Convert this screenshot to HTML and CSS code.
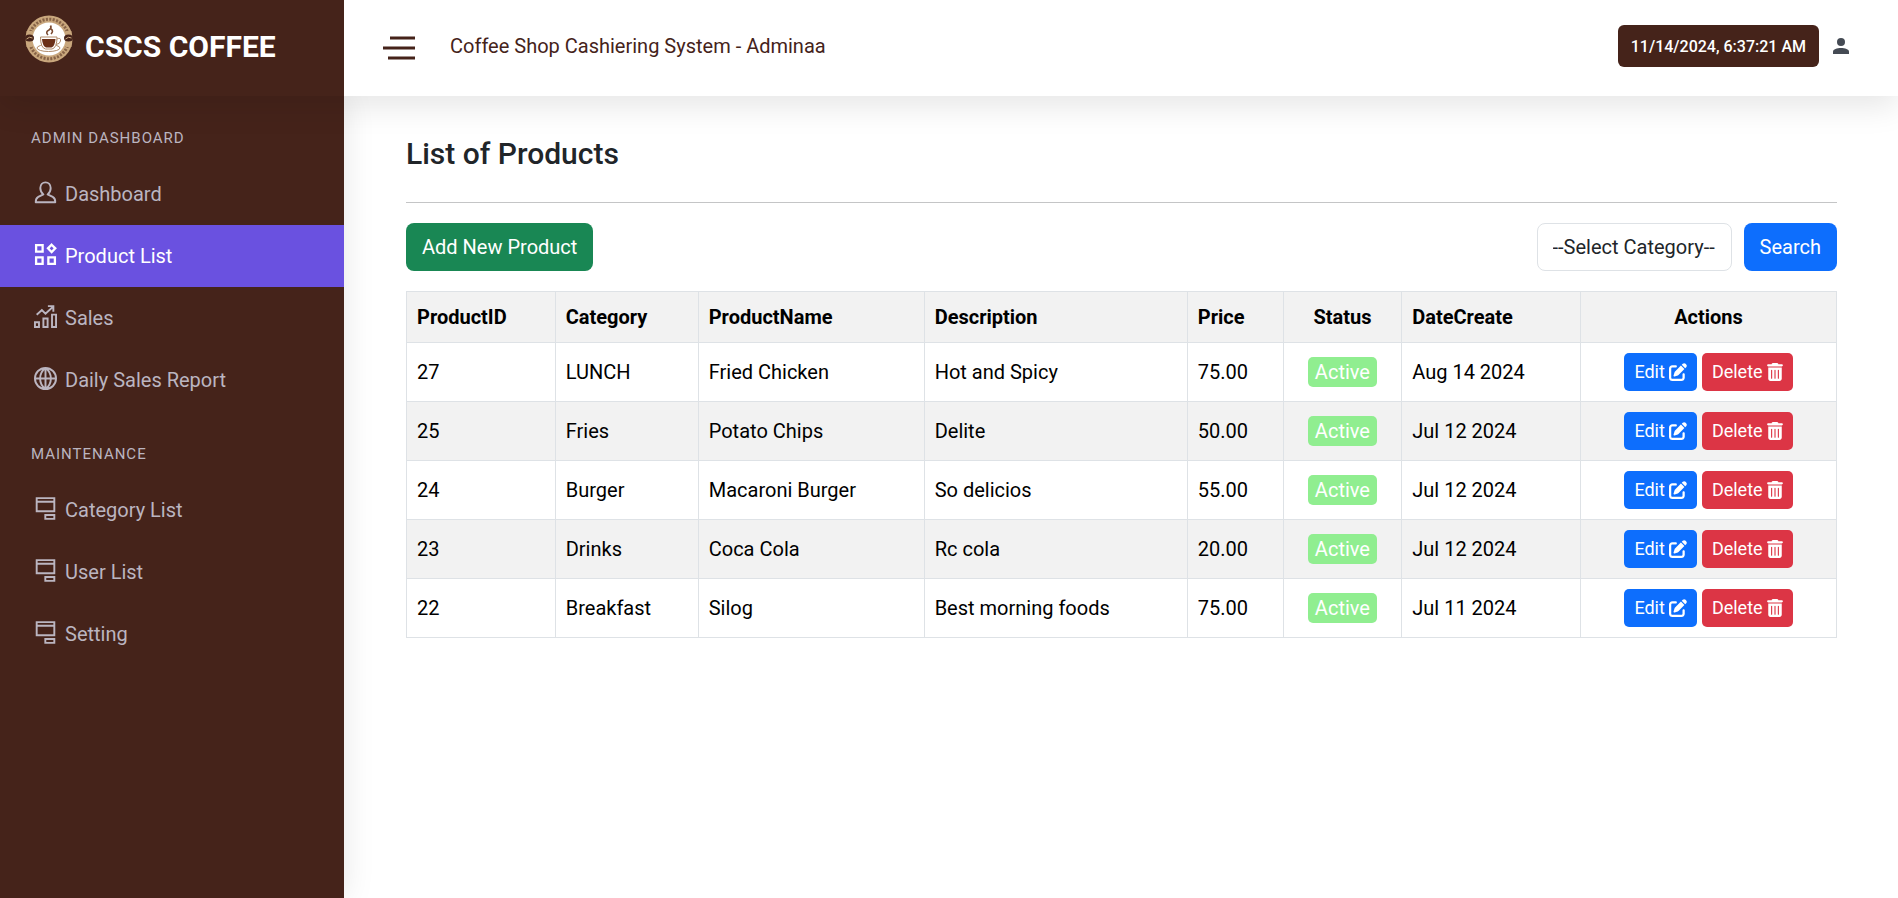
FILE: index.html
```html
<!DOCTYPE html>
<html lang="en">
<head>
<meta charset="utf-8">
<title>CSCS Coffee - List of Products</title>
<link rel="stylesheet" href="styles.css">
</head>
<body>
<svg class="sprite" aria-hidden="true">
  <symbol id="user" viewBox="0 0 24 24"><path fill="none" stroke="currentColor" stroke-width="2" stroke-linejoin="round" d="M9.800 14C7.400 12.300 6.600 10 6.600 7.400 6.600 3.600 9 1.400 12 1.400s5.400 2.200 5.400 6C17.400 10 16.600 12.300 14.200 14L19.500 16.600Q22.200 18 22.200 22.200H1.800Q1.800 18 4.500 16.600Z"/></symbol>
  <symbol id="grid" viewBox="0 0 24 24"><path fill="none" stroke="currentColor" stroke-width="2.400" d="M2.200 2.200H9V9H2.200ZM2.200 15H9V21.800H2.200ZM15 15H21.800V21.800H15ZM18.400 1.800L22.200 5.600 18.400 9.400 14.600 5.600Z"/></symbol>
  <symbol id="chart" viewBox="0 0 24 24"><path fill="none" stroke="currentColor" stroke-width="2" d="M1 18H5.200V23H1ZM9.800 14H14.200V23H9.800ZM18.800 10H23V23H18.800ZM2.800 10.200L8.200 5.200 12 9 19.800 1.800M14.500 1.200H20.200V7"/></symbol>
  <symbol id="globe" viewBox="0 0 24 24"><path fill="none" stroke="currentColor" stroke-width="2" d="M12 1A11 11 0 1 0 12 23 11 11 0 1 0 12 1ZM12 1C4.500 6.500 4.500 17.500 12 23M12 1C19.500 6.500 19.500 17.500 12 23M12 1V23M1 12H23"/></symbol>
  <symbol id="panel" viewBox="0 0 24 24"><path fill="none" stroke="currentColor" stroke-width="2" d="M2.800 1.200H21.200V14.800H2.800ZM2.800 5H21.200M11.800 18.800H21.200V22.800H11.800Z"/></symbol>
  <symbol id="edit" viewBox="0 0 512 512"><path fill="currentColor" d="M471.600 21.700c-21.900-21.900-57.300-21.900-79.200 0L362.300 51.700l97.900 97.900 30.100-30.100c21.900-21.900 21.900-57.300 0-79.200L471.600 21.700zm-299.200 220c-6.100 6.100-10.800 13.600-13.500 21.900l-29.600 88.800c-2.900 8.600-.6 18.100 5.800 24.600s15.900 8.700 24.600 5.800l88.800-29.600c8.200-2.700 15.700-7.400 21.900-13.500L437.700 172.300 339.700 74.300 172.400 241.700zM96 64C43 64 0 107 0 160V416c0 53 43 96 96 96H352c53 0 96-43 96-96V320c0-17.700-14.300-32-32-32s-32 14.300-32 32v96c0 17.700-14.300 32-32 32H96c-17.700 0-32-14.300-32-32V160c0-17.700 14.300-32 32-32h96c17.700 0 32-14.300 32-32s-14.300-32-32-32H96z"/></symbol>
  <symbol id="trash" viewBox="0 0 448 512"><path fill="currentColor" d="M135.200 17.700C140.600 6.800 151.700 0 163.800 0H284.200c12.100 0 23.200 6.800 28.600 17.700L320 32h96c17.700 0 32 14.300 32 32s-14.300 32-32 32H32C14.300 96 0 81.700 0 64S14.300 32 32 32h96l7.200-14.300zM32 128H416V448c0 35.300-28.700 64-64 64H96c-35.300 0-64-28.700-64-64V128zm96 64c-8.800 0-16 7.200-16 16V432c0 8.800 7.200 16 16 16s16-7.200 16-16V208c0-8.800-7.200-16-16-16zm96 0c-8.800 0-16 7.200-16 16V432c0 8.800 7.200 16 16 16s16-7.200 16-16V208c0-8.800-7.200-16-16-16zm96 0c-8.800 0-16 7.200-16 16V432c0 8.800 7.200 16 16 16s16-7.200 16-16V208c0-8.800-7.200-16-16-16z"/></symbol>
</svg>

<header class="topbar">
  <a class="brand" href="#">
    <svg class="brand-logo" viewBox="0 0 48 48" aria-hidden="true">
      <circle cx="24" cy="24" r="23.500" fill="#c9a77d"/>
      <circle cx="24" cy="24" r="19.800" fill="none" stroke="#6b4630" stroke-width="3" stroke-dasharray="2 1.400" stroke-opacity=".7" pathLength="122"/>
      <path fill="#c9a77d" d="M1.500 16H7V32H1.500ZM41 16H46.500V32H41Z"/>
      <circle cx="24" cy="24" r="16.500" fill="#fff"/>
      <ellipse cx="4.500" cy="23" rx="4.500" ry="3.500" fill="#45231a"/>
      <ellipse cx="43.500" cy="23" rx="4.500" ry="3.500" fill="#45231a"/>
      <path fill="none" stroke="#c9a77d" d="M1.500 24Q4.500 21 7.500 23M40.500 24Q43.500 21 46.500 23"/>
      <ellipse cx="23.500" cy="33" rx="11.500" ry="3.500" fill="#fff" stroke="#b08a68"/>
      <path fill="#fff" stroke="#b08a68" d="M15.500 22H32Q32 33 27 34H20.500Q15.500 33 15.500 22ZM32 24Q36 22 35.500 26 35 29 31 29.500"/>
      <path fill="#6b3018" d="M17 24H30.500Q30 31 26.500 32.500H21Q17.500 31 17 24Z"/>
      <path fill="none" stroke="#7a4a30" stroke-width="1.600" d="M23 20Q20 17 24 15 27 13 25.500 10.500M26 19Q29 16 26 14"/>
    </svg>
    <span class="brand-name">CSCS COFFEE</span>
  </a>
  <div class="topbar-main">
    <button class="menu-toggle" type="button" aria-label="Toggle menu">
      <svg viewBox="0 0 32 24" aria-hidden="true"><path stroke="#45231a" stroke-width="3" d="M7 2H32M0 12H32M5 22H32"/></svg>
    </button>
    <span class="system-name">Coffee Shop Cashiering System - Adminaa</span>
    <span class="clock">11/14/2024, 6:37:21 AM</span>
    <button class="account" type="button" aria-label="Account">
      <svg viewBox="0 0 16 16" aria-hidden="true"><circle cx="8" cy="4" r="4" fill="#454b54"/><path fill="#454b54" d="M0 16V13.500C0 8.700 16 8.700 16 13.500V16Z"/></svg>
    </button>
  </div>
</header>

<div class="layout">
  <nav class="sidebar">
    <h2 class="nav-heading">ADMIN DASHBOARD</h2>
    <a class="nav-link" href="#"><svg aria-hidden="true"><use href="#user"/></svg>Dashboard</a>
    <a class="nav-link active" href="#"><svg aria-hidden="true"><use href="#grid"/></svg>Product List</a>
    <a class="nav-link" href="#"><svg aria-hidden="true"><use href="#chart"/></svg>Sales</a>
    <a class="nav-link" href="#"><svg aria-hidden="true"><use href="#globe"/></svg>Daily Sales Report</a>
    <h2 class="nav-heading">MAINTENANCE</h2>
    <a class="nav-link" href="#"><svg aria-hidden="true"><use href="#panel"/></svg>Category List</a>
    <a class="nav-link" href="#"><svg aria-hidden="true"><use href="#panel"/></svg>User List</a>
    <a class="nav-link" href="#"><svg aria-hidden="true"><use href="#panel"/></svg>Setting</a>
  </nav>

  <main class="content">
    <h1 class="page-title">List of Products</h1>
    <hr class="rule">
    <div class="toolbar">
      <button class="btn btn-success" type="button">Add New Product</button>
      <form class="filter">
        <select class="category" aria-label="Category"><option>--Select Category--</option></select>
        <button class="btn btn-primary" type="button">Search</button>
      </form>
    </div>
    <table class="products">
      <colgroup><col class="c-id"><col class="c-cat"><col class="c-name"><col class="c-desc"><col class="c-price"><col class="c-status"><col class="c-date"><col></colgroup>
      <thead>
        <tr><th>ProductID</th><th>Category</th><th>ProductName</th><th>Description</th><th>Price</th><th class="center">Status</th><th>DateCreate</th><th class="center">Actions</th></tr>
      </thead>
      <tbody>
        <tr><td>27</td><td>LUNCH</td><td>Fried Chicken</td><td>Hot and Spicy</td><td>75.00</td><td class="center"><span class="status">Active</span></td><td>Aug 14 2024</td><td><div class="actions"><button class="btn-sm btn-primary" type="button">Edit<svg class="i-edit" aria-hidden="true"><use href="#edit"/></svg></button><button class="btn-sm btn-danger" type="button">Delete<svg class="i-trash" aria-hidden="true"><use href="#trash"/></svg></button></div></td></tr>
        <tr><td>25</td><td>Fries</td><td>Potato Chips</td><td>Delite</td><td>50.00</td><td class="center"><span class="status">Active</span></td><td>Jul 12 2024</td><td><div class="actions"><button class="btn-sm btn-primary" type="button">Edit<svg class="i-edit" aria-hidden="true"><use href="#edit"/></svg></button><button class="btn-sm btn-danger" type="button">Delete<svg class="i-trash" aria-hidden="true"><use href="#trash"/></svg></button></div></td></tr>
        <tr><td>24</td><td>Burger</td><td>Macaroni Burger</td><td>So delicios</td><td>55.00</td><td class="center"><span class="status">Active</span></td><td>Jul 12 2024</td><td><div class="actions"><button class="btn-sm btn-primary" type="button">Edit<svg class="i-edit" aria-hidden="true"><use href="#edit"/></svg></button><button class="btn-sm btn-danger" type="button">Delete<svg class="i-trash" aria-hidden="true"><use href="#trash"/></svg></button></div></td></tr>
        <tr><td>23</td><td>Drinks</td><td>Coca Cola</td><td>Rc cola</td><td>20.00</td><td class="center"><span class="status">Active</span></td><td>Jul 12 2024</td><td><div class="actions"><button class="btn-sm btn-primary" type="button">Edit<svg class="i-edit" aria-hidden="true"><use href="#edit"/></svg></button><button class="btn-sm btn-danger" type="button">Delete<svg class="i-trash" aria-hidden="true"><use href="#trash"/></svg></button></div></td></tr>
        <tr><td>22</td><td>Breakfast</td><td>Silog</td><td>Best morning foods</td><td>75.00</td><td class="center"><span class="status">Active</span></td><td>Jul 11 2024</td><td><div class="actions"><button class="btn-sm btn-primary" type="button">Edit<svg class="i-edit" aria-hidden="true"><use href="#edit"/></svg></button><button class="btn-sm btn-danger" type="button">Delete<svg class="i-trash" aria-hidden="true"><use href="#trash"/></svg></button></div></td></tr>
      </tbody>
    </table>
  </main>
</div>
</body>
</html>
```

FILE: styles.css
```css
* { box-sizing: border-box; }

body {
  display: flex;
  flex-direction: column;
  min-height: 100vh;
  margin: 0;
  background: #fff;
  color: #212529;
  font: 20px/30px Roboto, "Liberation Sans", sans-serif;
}

button, select { font: inherit; }
a { color: inherit; text-decoration: none; }
.sprite { display: none; }

.topbar {
  position: relative;
  z-index: 2;
  display: flex;
  height: 96px;
  background: #fff;
  box-shadow: 0 10px 30px rgba(0, 0, 0, 0.1);
}

.brand {
  display: flex;
  align-items: flex-start;
  gap: 12px;
  flex: none;
  width: 344px;
  padding: 15px 25px;
  background: #45231a;
  color: #fff;
}

.brand-logo { width: 48px; height: 48px; }
.brand-name { padding-top: 17px; font-size: 30px; font-weight: 700; }

.topbar-main {
  display: flex;
  align-items: center;
  flex: 1;
  padding: 0 49px 4px 39px;
}

.menu-toggle, .account { padding: 0; border: 0; background: none; }
.menu-toggle svg { display: block; width: 32px; height: 24px; margin-top: 4px; }
.system-name { margin-left: 35px; color: #45231a; }

.clock {
  margin-left: auto;
  padding: 7px 13px 5px;
  border-radius: 6px;
  background: #45231a;
  color: #fff;
  font-size: 16px;
  font-weight: 500;
}

.account { margin-left: 14px; }
.account svg { display: block; width: 16px; height: 16px; }

.layout { display: flex; flex: 1; }

.sidebar {
  flex: none;
  width: 344px;
  background: #45231a;
  color: #bbb5c0;
  box-shadow: 0 0 30px rgba(0, 0, 0, 0.1);
}

.nav-heading {
  margin: 0;
  padding: 27px 31px 10px;
  font-size: 15px;
  font-weight: 400;
  letter-spacing: 1px;
}

.nav-link + .nav-heading { padding-top: 28px; }

.nav-link {
  display: flex;
  align-items: center;
  gap: 8px;
  height: 62px;
  padding: 0 34px;
}

.nav-link svg { width: 23px; height: 23px; margin-bottom: 3px; }
.nav-link.active { background: #6a51e0; color: #fff; }

.content { flex: 1; padding: 40px 61px 40px 62px; }
.page-title { margin: 0; font-size: 30px; line-height: 36px; font-weight: 500; }
.rule { height: 1px; margin: 30px 0 20px; border: 0; background: #c4c5c6; }

.toolbar { display: flex; justify-content: space-between; margin-bottom: 20px; }
.filter { display: flex; gap: 12px; }

.btn {
  padding: 8px 16px;
  border: 0;
  border-radius: 8px;
  color: #fff;
}

.btn-success { background: #198754; }
.btn-primary { background: #0d6efd; }
.btn-danger { background: #dc3545; }

.category {
  appearance: none;
  height: 48px;
  padding: 8px 15px;
  border: 1px solid #dee2e6;
  border-radius: 8px;
  background: #fff;
  color: #212529;
}

.products {
  width: 100%;
  table-layout: fixed;
  border-collapse: collapse;
  color: #000;
}

.products th, .products td { padding: 10px; border: 1px solid #dee2e6; text-align: left; }
.products th { font-weight: 700; }
.products thead tr, .products tbody tr:nth-child(even) { background: #f2f2f2; }
.products .center { text-align: center; }
.c-id { width: 10.4%; }
.c-cat { width: 10%; }
.c-name { width: 15.8%; }
.c-desc { width: 18.4%; }
.c-price { width: 6.7%; }
.c-status { width: 8.3%; }
.c-date { width: 12.5%; }

.status {
  display: inline-block;
  padding: 0 7px;
  border-radius: 5px;
  background: #90ee90;
  color: #fff;
}

.actions { display: flex; justify-content: center; gap: 5px; }

.btn-sm {
  display: flex;
  align-items: center;
  gap: 4px;
  height: 38px;
  padding: 0 10px;
  border: 0;
  border-radius: 5px;
  color: #fff;
  font-size: 18px;
}

.i-edit { width: 18px; height: 18px; }
.i-trash { width: 16px; height: 18px; }
```
